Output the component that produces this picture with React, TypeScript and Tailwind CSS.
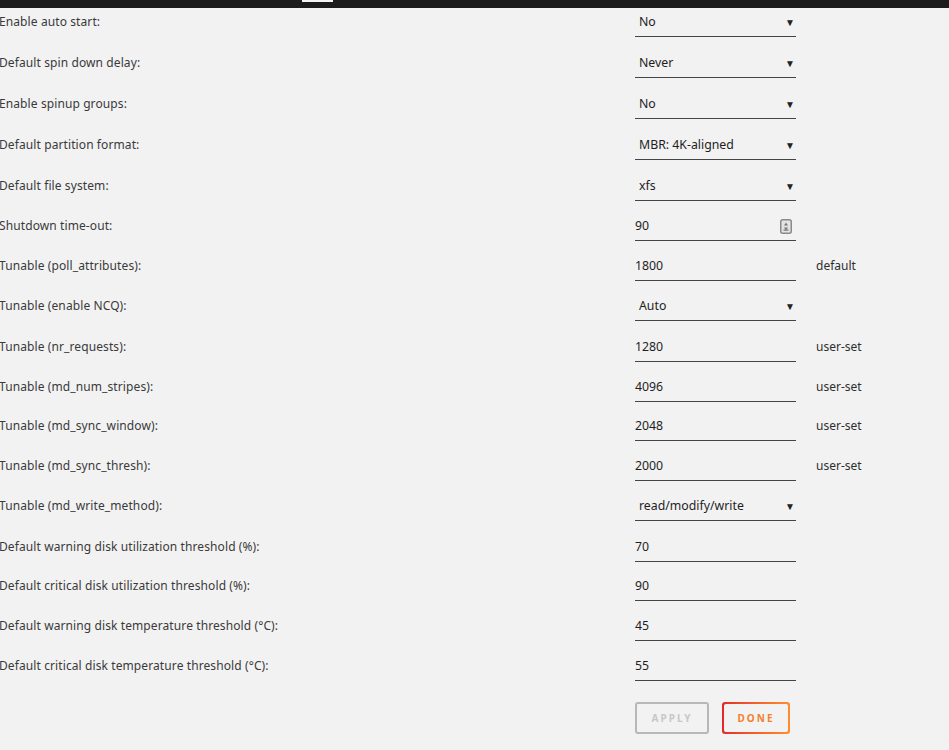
type Row = {
  label: string;
  value: string;
  kind: "select" | "input" | "number";
  note?: string;
  h: string;
};

const rows: Row[] = [
  { label: "Enable auto start:", value: "No", kind: "select", h: "h-[41px]" },
  { label: "Default spin down delay:", value: "Never", kind: "select", h: "h-[41px]" },
  { label: "Enable spinup groups:", value: "No", kind: "select", h: "h-[41px]" },
  { label: "Default partition format:", value: "MBR: 4K-aligned", kind: "select", h: "h-[41px]" },
  { label: "Default file system:", value: "xfs", kind: "select", h: "h-[40px]" },
  { label: "Shutdown time-out:", value: "90", kind: "number", h: "h-[40px]" },
  { label: "Tunable (poll_attributes):", value: "1800", kind: "input", note: "default", h: "h-[40px]" },
  { label: "Tunable (enable NCQ):", value: "Auto", kind: "select", h: "h-[41px]" },
  { label: "Tunable (nr_requests):", value: "1280", kind: "input", note: "user-set", h: "h-[40px]" },
  { label: "Tunable (md_num_stripes):", value: "4096", kind: "input", note: "user-set", h: "h-[39px]" },
  { label: "Tunable (md_sync_window):", value: "2048", kind: "input", note: "user-set", h: "h-[40px]" },
  { label: "Tunable (md_sync_thresh):", value: "2000", kind: "input", note: "user-set", h: "h-[40px]" },
  { label: "Tunable (md_write_method):", value: "read/modify/write", kind: "select", h: "h-[41px]" },
  { label: "Default warning disk utilization threshold (%):", value: "70", kind: "input", h: "h-[39px]" },
  { label: "Default critical disk utilization threshold (%):", value: "90", kind: "input", h: "h-[40px]" },
  { label: "Default warning disk temperature threshold (°C):", value: "45", kind: "input", h: "h-[40px]" },
  { label: "Default critical disk temperature threshold (°C):", value: "55", kind: "input", h: "h-[40px]" },
];

function SpinIcon() {
  return (
    <svg width="12" height="15" viewBox="0 0 12 15" className="mr-[4px]">
      <rect x="0.75" y="0.75" width="10.5" height="13.5" rx="2" fill="#e4e4e4" stroke="#8a8a8a" strokeWidth="1.5" />
      <path d="M4 6.5 L6 3.5 L8 6.5 Z" fill="#777" />
      <path d="M4 8.5 L6 11.5 L8 8.5 Z" fill="#777" />
      <rect x="3.5" y="10.5" width="5" height="1.2" fill="#777" />
    </svg>
  );
}

export default function App() {
  return (
    <div
      className="min-h-screen w-[949px] h-[750px] overflow-hidden bg-[#f2f2f2] text-[12px]"
      style={{ fontFamily: '"Noto Sans", "Open Sans", sans-serif' }}
    >
      {/* top bar */}
      <div className="h-[8px] bg-[#1c1c1c] pl-[302px]">
        <div className="h-[2px] w-[31px] bg-[#f4f4f4]" />
      </div>

      <div className="flex flex-col">
        {rows.map((r, i) => (
          <div key={i} className={`flex items-start ${r.h}`}>
            <div className="w-[635px] pt-[1px] leading-[26px] text-[#3a3a3a] -ml-[1px] mr-[1px] tracking-[0.1px]">
              {r.label}
            </div>
            <div className="w-[161px] h-[29px] border-b border-[#444] flex items-start pt-[1px] text-[12.3px]">
              {r.kind === "select" ? (
                <div className="flex w-full items-center justify-between pl-[4px] pr-[1px] h-[26px] text-[#1e1e1e]">
                  <span>{r.value}</span>
                  <span className="text-[10px] text-[#222]">▼</span>
                </div>
              ) : (
                <div className="flex w-full items-center justify-between h-[26px] text-[#1e1e1e]">
                  <span>{r.value}</span>
                  {r.kind === "number" && <SpinIcon />}
                </div>
              )}
            </div>
            {r.note && (
              <div className="ml-[20px] pt-[1px] leading-[26px] text-[#2e2e2e]">{r.note}</div>
            )}
          </div>
        ))}
      </div>

      {/* buttons */}
      <div className="flex gap-[13px] pl-[635px] mt-[10px]">
        <button className="w-[74px] h-[32px] rounded-[3px] border-2 border-[#b8b8b8] text-[#c8c8c8] text-[10px] font-bold tracking-[2px]">
          APPLY
        </button>
        <div className="w-[68px] h-[32px] rounded-[3px] p-[2px] bg-gradient-to-r from-[#e22828] to-[#ff8c2f]">
          <button className="w-full h-full rounded-[2px] bg-[#f2f2f2] text-[#f4802f] text-[10px] font-bold tracking-[2px]">
            DONE
          </button>
        </div>
      </div>
    </div>
  );
}
